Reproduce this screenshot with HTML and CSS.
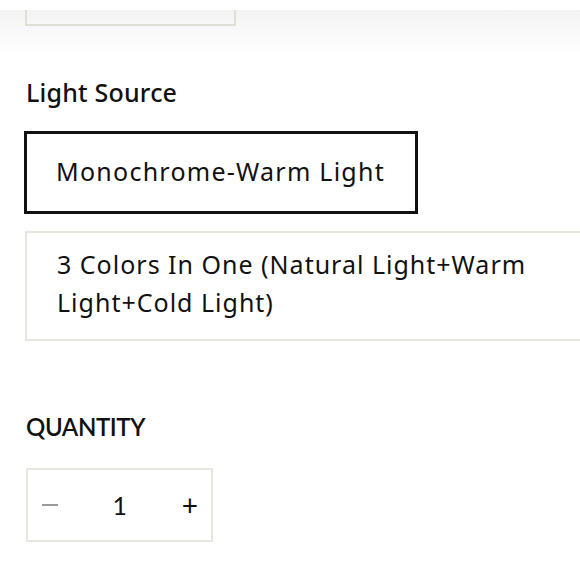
FILE: index.html
```html
<!DOCTYPE html>
<html>
<head>
<meta charset="utf-8">
<link rel="stylesheet" href="styles.css">
</head>
<body>
<div class="page">
  <div class="band">
    <div class="prev-box"></div>
  </div>
  <section class="option-group">
    <h3 class="group-label">Light Source</h3>
    <div class="options">
      <div class="option selected">Monochrome-Warm Light</div>
      <div class="option wide">3 Colors In One (Natural Light+Warm Light+Cold Light)</div>
    </div>
  </section>
  <section class="quantity">
    <h3 class="qty-label">QUANTITY</h3>
    <div class="stepper">
      <span class="minus"></span>
      <span class="value">1</span>
      <span class="plus">+</span>
    </div>
  </section>
</div>
</body>
</html>
```
FILE: styles.css
```css
html, body {
  margin: 0;
  padding: 0;
  background: #fff;
  overflow: hidden;
}
.page {
  width: 580px;
  height: 580px;
  padding-top: 10px;
  box-sizing: border-box;
  font-family: "Noto Sans", sans-serif;
  color: #111;
  overflow: hidden;
}
.band {
  height: 45px;
  background: linear-gradient(#f3f3f3, #fff);
  padding-left: 25px;
}
.prev-box {
  width: 207px;
  height: 14px;
  border: 2px solid #dedfd6;
  border-top: none;
}
.option-group {
  padding-left: 24px;
}
.group-label {
  margin: 0;
  margin-top: 20px;
  padding-left: 2px;
  font-size: 25px;
  font-weight: 500;
  line-height: 34px;
  letter-spacing: 0.2px;
}
.options {
  margin-top: 22px;
  display: flex;
  flex-direction: column;
  align-items: flex-start;
  gap: 17px;
}
.option {
  font-size: 25px;
  line-height: 38px;
  letter-spacing: 1px;
  box-sizing: border-box;
  border: 2px solid #e6e7df;
  padding: 18px 30px 18px 30px;
}
.option.selected {
  border: 3px solid #111;
  width: 394px;
  height: 83px;
  padding: 18px 29px;
  letter-spacing: 1.25px;
}
.option.wide {
  width: 590px;
  margin-left: 1px;
  padding-top: 12px;
  padding-bottom: 18px;
}
.quantity {
  padding-left: 26px;
  margin-top: 71px;
}
.qty-label {
  margin: 0;
  font-family: "Lato", sans-serif;
  font-size: 24px;
  font-weight: 600;
  line-height: 30px;
  letter-spacing: -0.4px;
}
.stepper {
  margin-top: 26px;
  width: 187px;
  height: 74px;
  box-sizing: border-box;
  border: 2px solid #e6e7df;
  display: flex;
  align-items: center;
  justify-content: space-between;
  padding: 0 13px 0 14px;
  font-family: "Lato", sans-serif;
}
.minus {
  width: 16px;
  height: 2px;
  background: #9a9a9a;
}
.value {
  font-size: 25px;
  font-weight: 400;
  margin-left: 0;
}
.plus {
  font-size: 28px;
  font-weight: 400;
}
```
